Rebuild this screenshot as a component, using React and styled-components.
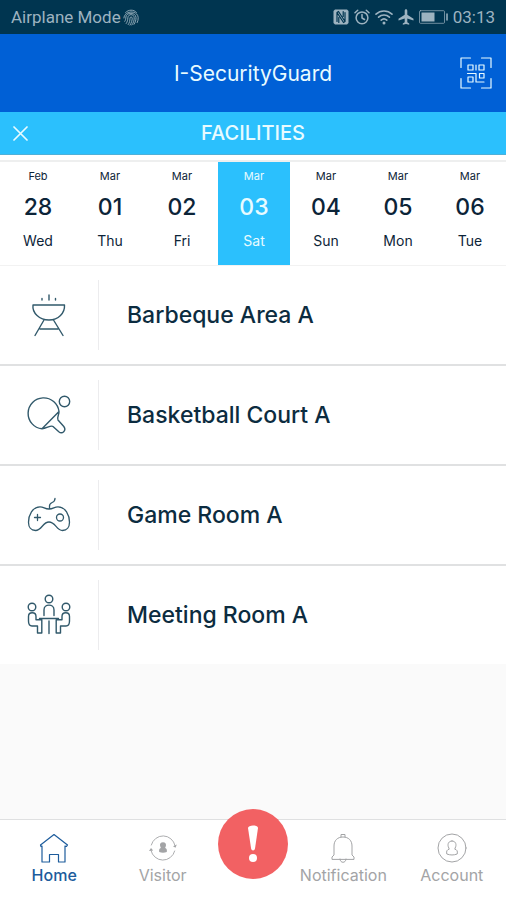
import React, { useState } from "react";
import styled, { createGlobalStyle } from "styled-components";

const GlobalStyle = createGlobalStyle`
  *, *::before, *::after { box-sizing: border-box; }
  body {
    margin: 0;
    background: #fafafa;
    color: #0c2c40;
    font-family: Inter, "Liberation Sans", sans-serif;
  }
  button { font: inherit; color: inherit; border: 0; padding: 0; background: none; cursor: pointer; }
  a { color: inherit; text-decoration: none; }
  h1, h2, ul { margin: 0; padding: 0; }
  ul { list-style: none; }
  svg { display: block; flex: none; }
`;

const Screen = styled.div`
  display: flex;
  flex-direction: column;
  min-height: 100vh;
`;

const StatusBar = styled.div`
  display: flex;
  align-items: center;
  justify-content: space-between;
  height: 34px;
  padding: 0 11px;
  background: #003550;
  color: #9db3c0;
  font-family: Roboto, sans-serif;
  font-size: 17px;
`;

const StatusGroup = styled.div`
  display: flex;
  align-items: center;
  gap: ${(p) => p.$gap}px;
`;

const Bar = styled.header`
  display: grid;
  grid-template-columns: 48px 1fr 48px;
  align-items: center;
  height: ${(p) => (p.$sub ? 43 : 78)}px;
  padding: 0 ${(p) => (p.$sub ? 0 : 6)}px;
  background: ${(p) => (p.$sub ? "#2bc0fd" : "#0060d6")};
  border-bottom: ${(p) => (p.$sub ? "1px solid #4fb0d8" : "0")};
  color: #e8fbff;
`;

const AppTitle = styled.h1`
  grid-column: 2;
  text-align: center;
  font-size: 21px;
  font-weight: 400;
`;

const SectionTitle = styled.h2`
  grid-column: 2;
  text-align: center;
  font-size: 20px;
  font-weight: 500;
`;

const IconButton = styled.button`
  display: flex;
  align-items: center;
  justify-content: ${(p) => (p.$end ? "flex-end" : "flex-start")};
  height: 40px;
  padding: 0 ${(p) => (p.$end ? 8 : 13)}px;
`;

const StripWrap = styled.div`
  padding-top: 5px;
  background: #fff;
`;

const DateStrip = styled.div`
  display: grid;
  grid-template-columns: repeat(7, 1fr);
  padding-left: 2px;
  border-top: 2px solid #eeefef;
  border-bottom: 1px solid #f2f2f2;
`;

const DateCell = styled.button`
  display: flex;
  flex-direction: column;
  align-items: center;
  height: 103px;
  padding-top: 6px;
  background: ${(p) => (p.$active ? "#2bc0fd" : "#fff")};
  color: ${(p) => (p.$active ? "#e8fbff" : "#0c2438")};
`;

const Month = styled.span`
  font-size: 11px;
  line-height: 16px;
`;

const Day = styled.span`
  padding: 8px 0;
  font-size: 23px;
  line-height: 30px;
  font-weight: 500;
`;

const Weekday = styled.span`
  font-size: 14px;
  line-height: 22px;
`;

const FacilityList = styled.ul`
  background: #fff;
`;

const FacilityItem = styled.li`
  & + & { border-top: 2px solid #e0e1e2; }
`;

const FacilityButton = styled.button`
  display: flex;
  align-items: center;
  width: 100%;
  height: 98px;
  text-align: left;
`;

const FacilityIcon = styled.span`
  display: flex;
  align-items: center;
  justify-content: center;
  width: 99px;
  height: 70px;
  border-right: 1px solid #ececee;
  color: #31596b;
`;

const FacilityName = styled.span`
  padding-left: 28px;
  font-size: 23px;
  line-height: 30px;
  font-weight: 500;
`;

const TabBar = styled.nav`
  display: grid;
  grid-template-columns: 3fr 3fr 2fr 3fr 3fr;
  height: 81px;
  margin-top: auto;
  background: #fff;
  border-top: 1px solid #dfe0e1;
`;

const Tab = styled.a`
  display: flex;
  flex-direction: column;
  align-items: center;
  gap: 2px;
  padding-top: 13px;
  font-size: 16px;
  line-height: 20px;
  font-weight: ${(p) => (p.$active ? 500 : 400)};
  color: ${(p) => (p.$active ? "#1d5c9c" : "#a3a4a6")};
`;

const AlertButton = styled.button`
  display: flex;
  align-items: center;
  justify-content: center;
  justify-self: center;
  width: 70px;
  height: 70px;
  margin-top: -11px;
  border-radius: 50%;
  background: #f26163;
`;

const Icon = ({ w, h = w, sw = 1, children }) => (
  <svg width={w} height={h} viewBox={`0 0 ${w} ${h}`} fill="none" stroke="currentColor"
    strokeWidth={sw} strokeLinejoin="round" strokeLinecap="round" aria-hidden="true">{children}</svg>
);

const Fingerprint = () => (
  <Icon w={16} h={17} sw={0.9}>
    <path d="M2.500 3.600C5.400.4 10.600.2 13.500 3.400M.9 9c.5-8 14-8 14.300-.3 0 1.800-.3 3.500-1 4.900M1.800 12.300c1-1.400.9-2.500 1.100-4.300.4-5 9.800-5 10.100.5.1 2.500-.7 4.800-2 6.800M3.200 14.500c1.300-1.800 1.500-3.600 1.700-5.900.3-4 6.100-4 6.300.2.1 2.800-.9 5.300-2.400 7.200M5.200 15.600c1.400-2 1.700-4 1.800-6.500.1-1.500 2.200-1.500 2.200 0 0 2.500-.8 4.800-2.200 7" />
  </Icon>
);

const Nfc = () => (
  <Icon w={16} sw={1.2}>
    <path fill="currentColor" stroke="none" d="M2 .5h12L15.500 2v12L14 15.500H2L.5 14V2z" />
    <path stroke="#003550" d="M4 12.500v-9l1.500-1 6.500 10V3.500M4 3.500l6.500 10 1.500-1M5.800 13.500V8.500M10.200 2.500v5" />
  </Icon>
);

const Alarm = () => (
  <Icon w={16} sw={1.5}>
    <circle cx="8" cy="8.800" r="5.900" />
    <path d="M1 3.700l2.700-2.400M12.300 1.300L15 3.700M8 5.500V9l2.500 1.500" />
  </Icon>
);

const Wifi = () => (
  <Icon w={18} h={16} sw={1.6}>
    <path d="M1 5.200C5.500 1 12.500 1 17 5.200M3.600 8.200c3-2.900 7.800-2.900 10.800 0M6.200 11.100c1.600-1.500 4-1.500 5.600 0" />
    <circle cx="9" cy="14" r="1.500" fill="currentColor" stroke="none" />
  </Icon>
);

const Plane = () => (
  <Icon w={16}>
    <path fill="currentColor" stroke="none" d="M8 .3c.9 0 1.300.7 1.300 1.600v3.800l6.200 4v1.700l-6.200-2v3.800l1.900 1.400v1.200L8 14.900l-3.200.9v-1.200l1.900-1.400V9.400l-6.200 2V9.700l6.200-4V1.900c0-.9.4-1.600 1.300-1.600z" />
  </Icon>
);

const Battery = () => (
  <Icon w={29} h={14}>
    <rect x=".5" y=".7" width="25" height="12.600" rx="1" opacity=".7" />
    <rect x="2.500" y="2.500" width="13" height="9" fill="currentColor" stroke="none" />
    <path d="M28 4v6" strokeWidth="1.500" />
  </Icon>
);

const Qr = () => (
  <Icon w={32} sw={1.2}>
    <path d="M1 10.500V1h9.500M21.500 1H31v9.500M31 21.500V31h-9.500M10.500 31H1v-9.500" />
    <path d="M8 8h5v5H8zM19 8h5v5h-5zM8 20h5v5H8zM16 8v5M7.500 16.500H16V25h8M24 21h-4.500v-4.500H24V21" />
  </Icon>
);

const Close = () => (
  <Icon w={15} sw={1.700}><path d="M1 1l13 13M14 1L1 14" /></Icon>
);

const Grill = () => (
  <Icon w={44} sw={1.400}>
    <path d="M6 12h31.500c.5 8-6 15-15.500 15S5 20 6 12zM17 27L8 42.500M26.500 27L36 42.500M13 36h18M22 2v5M15 5.500v1.500M28.500 5.500v1.500" />
  </Icon>
);

const Paddle = () => (
  <Icon w={44} sw={1.400}>
    <path d="M15 35.800A15.500 15.500 0 1 1 32 18.500c.2 3-2.500 6.500-1 8.500l5.800 6.500c3 4-1.600 8-5 5.200L26 33.500c-2-1.700-6.500 2-11 2.300zM15 35.800l17-17.300" />
    <circle cx="37.500" cy="8.500" r="5.200" />
  </Icon>
);

const Gamepad = () => (
  <Icon w={44} sw={1.300}>
    <path d="M22 16c4.500 0 5-2.200 9-2.200 7.500 0 11.500 8.500 11.500 15.500 0 4.500-2.500 8.200-7 8.200-6 0-7-8.500-13.500-8.500S15 37.500 8.500 37.500c-4.500 0-7-3.700-7-8.200 0-7 4-15.500 11.500-15.500 4 0 4.500 2.200 9 2.200zM22.500 16v-3c0-5 5.500-2 5.500-7.500" />
    <path d="M7.500 24.500h6M10.500 21.500v6" />
    <circle cx="33" cy="24.500" r="3.500" />
  </Icon>
);

const Meeting = () => (
  <Icon w={44} sw={1.400}>
    <circle cx="22" cy="6" r="3.800" />
    <path d="M17 22.500V17c0-6.500 10-6.500 10 0v5.500" />
    <circle cx="5" cy="14" r="3.800" />
    <path d="M9 26.800h5.800V40h-4.300v-7H5c-3.500 0-3.500-3-3.500-5v-4.500c0-5 7.500-5 7.500 0v3.300M12.500 25.500h19M22 28v12.500" />
    <circle cx="39" cy="14" r="3.800" />
    <path d="M35 26.800h-5.800V40h4.300v-7H39c3.500 0 3.500-3 3.500-5v-4.500c0-5-7.500-5-7.500 0v3.300" />
  </Icon>
);

const Home = () => (
  <Icon w={30} sw={1.200}>
    <path d="M1.500 12L15 1.500 28.500 12l-1 1.500-1.500-.5v16h-6.500v-7.500h-9V29H3V13l-1 .5z" />
  </Icon>
);

const Visitor = () => (
  <Icon w={30} sw={0.9}>
    <path d="M3.300 12A12.200 12.200 0 0 1 27 12.500M26.700 18A12.200 12.200 0 0 1 3 17.500" />
    <path fill="currentColor" stroke="none" d="M1 18l2-3 2.200 2.600zM25 13.200l3.800-1.700-1.300 3.200zM15 9.300c2.300 0 3.400 1.700 2.900 3.800-.2.900-.7 1.300-.7 2 1.400.4 2 1.500 1.600 3.900-2.500.9-5.100.9-7.600 0-.4-2.400.2-3.500 1.600-3.900 0-.7-.5-1.100-.7-2-.5-2.100.6-3.800 2.900-3.800z" />
  </Icon>
);

const Bell = () => (
  <Icon w={30} sw={1}>
    <path d="M4 26v-2l2-2V13c0-5.500 3.500-9 9-9s9 3.500 9 9v9l2 2v2zM13 4V1.500h4V4M12 26c0 4.500 6 4.500 6 0" />
  </Icon>
);

const Account = () => (
  <Icon w={30} sw={1}>
    <circle cx="15" cy="15" r="14" />
    <path d="M15 8c3.300 0 4.600 2.700 3.700 5.800-.3 1-.9 1.500-.9 2.400 2.200.6 3 1.800 2.400 4.800-3.400 1.300-7 1.300-10.400 0-.6-3 .2-4.200 2.400-4.800 0-.9-.6-1.400-.9-2.400C10.400 10.700 11.700 8 15 8z" />
  </Icon>
);

const Exclamation = () => (
  <Icon w={14} h={38}>
    <path fill="#fff" stroke="none" d="M2 3C2-.5 12-.5 12 3L9 23.500c-.4 2.500-3.500 2.500-3.900 0z" />
    <circle cx="7" cy="33" r="4" fill="#fff" stroke="none" />
  </Icon>
);

const DATES = [
  ["Feb", "28", "Wed"], ["Mar", "01", "Thu"], ["Mar", "02", "Fri"], ["Mar", "03", "Sat"],
  ["Mar", "04", "Sun"], ["Mar", "05", "Mon"], ["Mar", "06", "Tue"],
];

const FACILITIES = [
  ["Barbeque Area A", Grill],
  ["Basketball Court A", Paddle],
  ["Game Room A", Gamepad],
  ["Meeting Room A", Meeting],
];

export default function App() {
  const [selected, setSelected] = useState("03");
  return (
    <Screen>
      <GlobalStyle />
      <StatusBar>
        <StatusGroup $gap={2}>Airplane Mode<Fingerprint /></StatusGroup>
        <StatusGroup $gap={5}><Nfc /><Alarm /><Wifi /><Plane /><Battery />03:13</StatusGroup>
      </StatusBar>
      <Bar>
        <AppTitle>I-SecurityGuard</AppTitle>
        <IconButton $end aria-label="Scan code"><Qr /></IconButton>
      </Bar>
      <Bar as="div" $sub>
        <IconButton aria-label="Close"><Close /></IconButton>
        <SectionTitle>FACILITIES</SectionTitle>
      </Bar>
      <StripWrap>
        <DateStrip>
          {DATES.map(([month, day, weekday]) => (
            <DateCell key={day} $active={day === selected} aria-pressed={day === selected} onClick={() => setSelected(day)}>
              <Month>{month}</Month>
              <Day>{day}</Day>
              <Weekday>{weekday}</Weekday>
            </DateCell>
          ))}
        </DateStrip>
      </StripWrap>
      <FacilityList>
        {FACILITIES.map(([name, Glyph]) => (
          <FacilityItem key={name}>
            <FacilityButton>
              <FacilityIcon><Glyph /></FacilityIcon>
              <FacilityName>{name}</FacilityName>
            </FacilityButton>
          </FacilityItem>
        ))}
      </FacilityList>
      <TabBar>
        <Tab href="#home" $active aria-current="page"><Home />Home</Tab>
        <Tab href="#visitor"><Visitor />Visitor</Tab>
        <AlertButton aria-label="Emergency alert"><Exclamation /></AlertButton>
        <Tab href="#notification"><Bell />Notification</Tab>
        <Tab href="#account"><Account />Account</Tab>
      </TabBar>
    </Screen>
  );
}
